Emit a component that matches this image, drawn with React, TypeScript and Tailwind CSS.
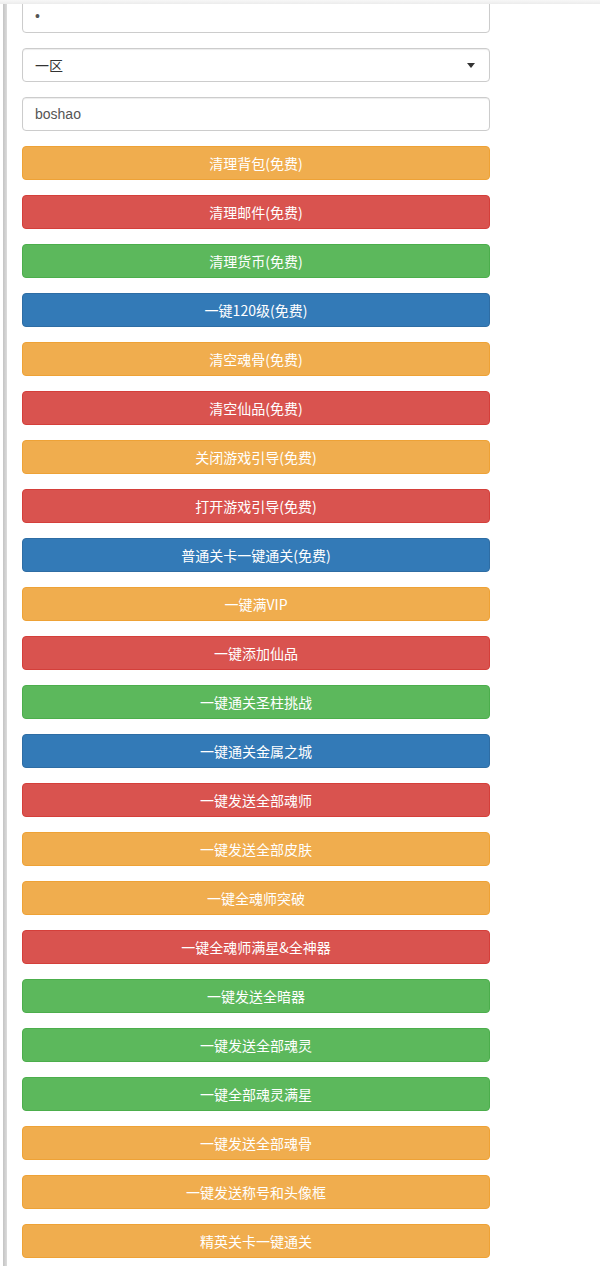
import React from "react";

type Kind = "warning" | "danger" | "success" | "primary";

const btns: [string, Kind][] = [
  ["清理背包(免费)", "warning"],
  ["清理邮件(免费)", "danger"],
  ["清理货币(免费)", "success"],
  ["一键120级(免费)", "primary"],
  ["清空魂骨(免费)", "warning"],
  ["清空仙品(免费)", "danger"],
  ["关闭游戏引导(免费)", "warning"],
  ["打开游戏引导(免费)", "danger"],
  ["普通关卡一键通关(免费)", "primary"],
  ["一键满VIP", "warning"],
  ["一键添加仙品", "danger"],
  ["一键通关圣柱挑战", "success"],
  ["一键通关金属之城", "primary"],
  ["一键发送全部魂师", "danger"],
  ["一键发送全部皮肤", "warning"],
  ["一键全魂师突破", "warning"],
  ["一键全魂师满星&全神器", "danger"],
  ["一键发送全暗器", "success"],
  ["一键发送全部魂灵", "success"],
  ["一键全部魂灵满星", "success"],
  ["一键发送全部魂骨", "warning"],
  ["一键发送称号和头像框", "warning"],
  ["精英关卡一键通关", "warning"],
];

const cls: Record<Kind, string> = {
  warning: "bg-[#f0ad4e] border-[#eea236]",
  danger: "bg-[#d9534f] border-[#d43f3a]",
  success: "bg-[#5cb85c] border-[#4cae4c]",
  primary: "bg-[#337ab7] border-[#2e6da4]",
};

const font = { fontFamily: '"Liberation Sans", Arial, "Noto Sans CJK SC", sans-serif' };

export default function App() {
  return (
    <div className="relative w-[605px] h-[1266px] overflow-hidden bg-white" style={font}>
      <div className="absolute left-0 right-[5px] top-0 h-[4px] bg-gradient-to-b from-[#f7f7f7] to-[#ececec] z-10" />
      <div className="flex h-full">
        <div className="w-[3px] bg-white shrink-0" />
        <div className="w-[4px] shrink-0 bg-gradient-to-r from-[#c4c4c4] to-[#dcdcdc]" />
        <div className="pl-[15px] w-[483px] shrink-0 flex flex-col gap-[15px] -mt-[1px]">
          <div className="h-[34px] border border-[#ccc] rounded-[4px] shadow-[inset_0_1px_1px_rgba(0,0,0,0.075)] flex items-center px-[12px] text-[14px] text-[#555]">
            •
          </div>
          <div className="h-[34px] border border-[#ccc] rounded-[4px] shadow-[inset_0_1px_1px_rgba(0,0,0,0.075)] flex items-center justify-between pl-[12px] pr-[14px] text-[14px] text-[#333]" style={{ fontFamily: '"Noto Sans CJK SC", sans-serif' }}>
            <span>一区</span>
            <span className="w-0 h-0 border-l-[4px] border-r-[4px] border-t-[5px] border-l-transparent border-r-transparent border-t-[#333]" />
          </div>
          <div className="h-[34px] border border-[#ccc] rounded-[4px] shadow-[inset_0_1px_1px_rgba(0,0,0,0.075)] flex items-center px-[12px] text-[14px] text-[#555]">
            boshao
          </div>
          {btns.map(([t, k]) => (
            <div
              key={t}
              className={`h-[34px] shrink-0 border rounded-[4px] flex items-center justify-center text-white text-[14px] ${cls[k]}`}
              style={{ fontFamily: '"Noto Sans CJK SC", "Liberation Sans", sans-serif' }}
            >
              {t}
            </div>
          ))}
        </div>
      </div>
    </div>
  );
}
